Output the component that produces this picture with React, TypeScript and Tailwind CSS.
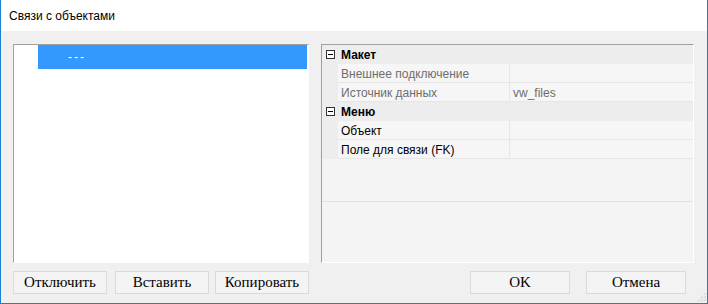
function MinusBox() {
  return (
    <svg width="9" height="9" viewBox="0 0 9 9" className="shrink-0">
      <rect x="0.5" y="0.5" width="8" height="8" fill="#ffffff" stroke="#333333" />
      <line x1="2" y1="4.5" x2="7" y2="4.5" stroke="#000000" />
    </svg>
  )
}

function Category({ label }: { label: string }) {
  return (
    <div className="flex h-[19px] items-center bg-[#ededed]">
      <div className="flex w-[16px] justify-center">
        <MinusBox />
      </div>
      <span className="pl-[3px] pt-px text-[12px] font-bold text-black">{label}</span>
    </div>
  )
}

function Prop({ name, value, muted }: { name: string; value?: string; muted?: boolean }) {
  const color = muted ? 'text-[#6d6d6d]' : 'text-black'
  return (
    <div className="flex h-[19px] bg-[#ededed]">
      <div className="w-[16px]" />
      <div className="flex flex-1 border-b border-[#e6e6e6] bg-[#f6f6f6]">
        <div className={`flex w-[171px] items-center pl-[3px] pt-px text-[12px] ${color}`}>{name}</div>
        <div className={`flex flex-1 items-center border-l border-[#e6e6e6] pl-[3px] pt-px text-[12px] ${color}`}>
          {value}
        </div>
      </div>
    </div>
  )
}

function Btn({ label, w }: { label: string; w: string }) {
  return (
    <button
      className={`flex h-[23px] ${w} items-center justify-center border border-[#d9d9de] bg-[#f4f4f4] font-['Liberation_Serif','Times_New_Roman',serif] text-[15px] text-black`}
    >
      {label}
    </button>
  )
}

export default function App() {
  return (
    <div className="relative flex h-[304px] w-[708px] flex-col border-x border-b border-[#1c7fd6] bg-[#f0f0f0] font-['Liberation_Sans',Arial,sans-serif]">
      {/* Title */}
      <div className="flex h-[31px] items-center bg-white pl-[8px] text-[12px] text-black">Связи с объектами</div>

      {/* Panels */}
      <div className="box-content flex h-[219px] gap-[12px] pl-[12px] pt-[13px]">
        {/* Tree */}
        <div className="flex w-[296px] flex-col border border-l-[#a0a0a0] border-t-[#a0a0a0] border-r-white border-b-white bg-white">
          <div className="ml-[24px] mr-[1px] flex h-[24px] items-center bg-[#3399ff] pl-[30px] text-[12px] tracking-[2px] text-white">
            ---
          </div>
        </div>

        {/* Property grid */}
        <div className="flex w-[373px] flex-col border border-l-[#a0a0a0] border-t-[#a0a0a0] border-r-white border-b-white bg-[#f4f4f4]">
          <Category label="Макет" />
          <Prop name="Внешнее подключение" muted />
          <Prop name="Источник данных" value="vw_files" muted />
          <Category label="Меню" />
          <Prop name="Объект" />
          <Prop name="Поле для связи (FK)" />
          <div className="h-[42px]" />
          <div className="flex-1 border-t border-[#e2e2e2]" />
        </div>
      </div>

      {/* Buttons */}
      <div className="flex pl-[12px] pt-[8px]">
        <Btn label="Отключить" w="w-[94px]" />
        <div className="w-[8px]" />
        <Btn label="Вставить" w="w-[94px]" />
        <div className="w-[6px]" />
        <Btn label="Копировать" w="w-[94px]" />
        <div className="flex-1" />
        <Btn label="OK" w="w-[100px]" />
        <div className="w-[16px]" />
        <Btn label="Отмена" w="w-[100px]" />
        <div className="w-[21px]" />
      </div>

      {/* Resize grip */}
      <svg width="11" height="11" viewBox="0 0 11 11" className="absolute bottom-0 right-0">
        <line x1="10" y1="1" x2="1" y2="10" stroke="#b8b8b8" strokeDasharray="1 1" />
        <line x1="10" y1="4" x2="4" y2="10" stroke="#b8b8b8" strokeDasharray="1 1" />
        <line x1="10" y1="7" x2="7" y2="10" stroke="#b8b8b8" strokeDasharray="1 1" />
      </svg>
    </div>
  )
}
